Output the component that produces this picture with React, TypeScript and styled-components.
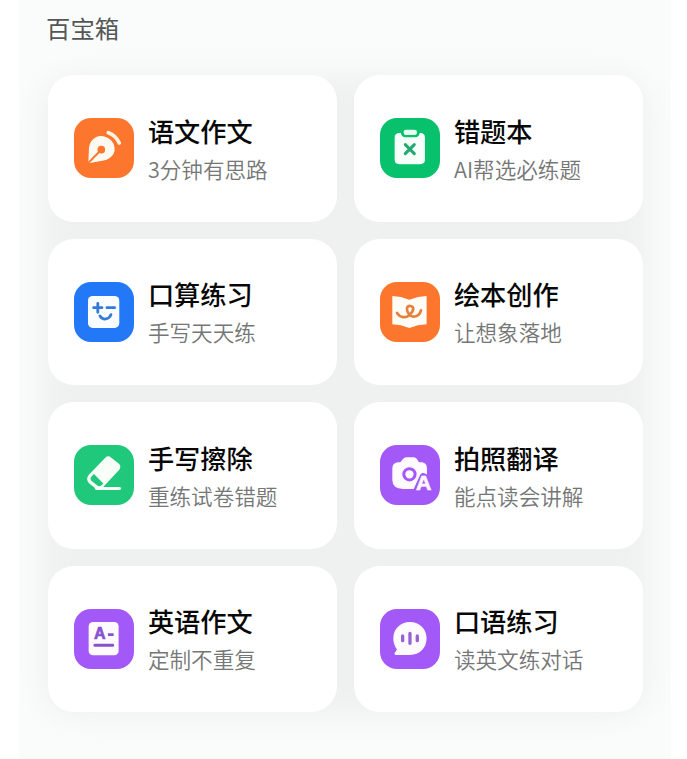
import React from 'react';
import styled, { createGlobalStyle } from 'styled-components';

const GlobalStyle = createGlobalStyle`
  * { box-sizing: border-box; }
  html, body { margin: 0; background: #fff; }
  body { font-family: "Noto Sans CJK SC", sans-serif; }
`;

const Page = styled.main`
  width: 687px;
  height: 759px;
  padding: 0 16px 0 19px;
  overflow: hidden;
  background: #fff;
`;

const Panel = styled.section`
  height: 100%;
  padding: 10px 27px 0 29px;
  overflow: hidden;
  background: #fafcfb;
`;

const Heading = styled.h1`
  margin: 0 0 29px -2px;
  height: 36px;
  font-size: 24.4px;
  line-height: 36px;
  font-weight: 400;
  color: #555756;
`;

const Grid = styled.div`
  position: relative;
  display: grid;
  grid-template-columns: 289px 289px;
  grid-auto-rows: 146.5px;
  gap: 17px;
  width: 595px;

  /* soft shade shared by all the cards */
  &::before {
    content: '';
    position: absolute;
    inset: 0 -6px -4px;
    border-radius: 36px;
    background: #eff0f0;
    filter: blur(12px);
  }
`;

const Card = styled.article`
  position: relative;
  display: flex;
  align-items: center;
  gap: 14px;
  padding: 0 0 0 26.3px;
  border-radius: 26px;
  background: #fff;
`;

const Tile = styled.svg`
  flex: none;
  width: 59.6px;
  height: 59.6px;
  border-radius: 17px;
  background: ${(p) => p.color};
`;

const Copy = styled.div`
  display: flex;
  flex-direction: column;
  padding-top: 3px;
  white-space: nowrap;
`;

const Title = styled.h2`
  margin: 0;
  font-size: 26.2px;
  line-height: 38px;
  font-weight: 500;
  color: #080808;
`;

const Subtitle = styled.p`
  margin: 0;
  font-size: 21.6px;
  line-height: 38px;
  font-weight: 350;
  color: #757776;
`;

const Letter = styled.text`
  font-family: "Liberation Sans", sans-serif;
  font-weight: 700;
`;

const ORANGE = '#fc762d';
const GREEN = '#08c16c';
const MINT = '#1fc87a';
const BLUE = '#2378f7';
const PURPLE = '#a259f8';

type Tool = {
  title: string;
  note: string;
  color: string;
  top: number;
  art: React.ReactNode;
};

const tools: Tool[] = [
  {
    title: '语文作文', note: '3分钟有思路', color: ORANGE, top: 32,
    art: (
      <>
        <path d="M74 168 L76 121 Q78 99 98 89 Q112 83 128 90 Q150 99 153 121 Q155 140 137 153 Q129 159 120 160 Z" fill="#fffaf1" />
        <path d="M72 169 L112 128" stroke={ORANGE} strokeWidth="6" />
        <circle cx="113" cy="127" r="11.5" fill={ORANGE} />
        <path d="M134 76 Q157 84 167 107" stroke="#fff1df" strokeWidth="11" strokeLinecap="round" fill="none" />
      </>
    ),
  },
  {
    title: '错题本', note: 'AI帮选必练题', color: GREEN, top: 32,
    art: (
      <>
        <path d="M90 77 H152 Q166 77 166 91 V157 Q166 171 152 171 H89 Q75 171 75 157 V91 Q75 77 90 77Z" fill="#f7fffb" />
        <rect x="94" y="60" width="56" height="30" rx="13" fill={GREEN} />
        <rect x="102" y="67" width="40" height="16" rx="7" fill="#e5fff3" />
        <path d="M107 112 L134 139 M134 112 L107 139" stroke="#20a970" strokeWidth="9" strokeLinecap="round" />
      </>
    ),
  },
  {
    title: '口算练习', note: '手写天天练', color: BLUE, top: 30,
    art: (
      <>
        <rect x="73" y="72" width="94" height="96" rx="14" fill="#fafdff" />
        <path d="M90 107 H115 M102.5 94 V121 M130 107 H153 M109 132 Q116 143 127 141 Q138 139 142 128" stroke="#347bd8" strokeWidth="8.5" strokeLinecap="round" fill="none" />
      </>
    ),
  },
  {
    title: '绘本创作', note: '让想象落地', color: ORANGE, top: 30,
    art: (
      <>
        <path d="M68 72 Q94 73 119 83 Q145 73 171 72 V157 Q145 158 119 168 Q94 158 68 157 Z" fill="#fffdf5" />
        <path d="M82 123 C90 137 108 140 120 129 C134 115 134 103 122 102 C109 101 109 116 119 128 C129 139 150 134 154 115" stroke="#e5803f" strokeWidth="8" strokeLinecap="round" fill="none" />
      </>
    ),
  },
  {
    title: '手写擦除', note: '重练试卷错题', color: MINT, top: 30,
    art: (
      <>
        <path d="M75 120 L125 68 Q134 60 143 68 L166 86 Q174 94 167 104 L118 157 Q107 167 95 160 L76 145 Q65 133 75 120Z" fill="#f8fff9" />
        <path d="M91 117 L119 146 Q111 157 101 152 L84 138 Q78 131 83 125Z" fill={MINT} />
        <path d="M98 161 H168" stroke="#f8fff9" strokeWidth="9" strokeLinecap="round" />
      </>
    ),
  },
  {
    title: '拍照翻译', note: '能点读会讲解', color: PURPLE, top: 30,
    art: (
      <>
        <path d="M84 82 H92 L100 72 Q104 67 110 67 H132 Q138 67 142 72 L148 82 H158 Q171 85 172 98 V162 H101 Q68 161 68 135 V100 Q69 84 84 82Z" fill="#fffaff" />
        <circle cx="119.5" cy="118" r="17" fill="none" stroke={PURPLE} strokeWidth="9" />
        <path d="M134 169 L153 127 Q158 113 169 122 L190 169Z" fill={PURPLE} stroke={PURPLE} strokeWidth="9" />
        <Letter x="139" y="166" fontSize="61" textLength="46" lengthAdjust="spacingAndGlyphs" fill="#fff7ff" stroke="#fff7ff" strokeWidth="2">A</Letter>
      </>
    ),
  },
  {
    title: '英语作文', note: '定制不重复', color: PURPLE, top: 33,
    art: (
      <>
        <rect x="75" y="72" width="90" height="100" rx="13" fill="#fefaff" />
        <Letter x="91" y="124" fontSize="48" fill="#8852cf" stroke="#8852cf" strokeWidth="2">A</Letter>
        <path d="M133 110 H150" stroke="#8852cf" strokeWidth="8" />
        <path d="M94 142 H147" stroke="#8852cf" strokeWidth="9" strokeLinecap="round" />
      </>
    ),
  },
  {
    title: '口语练习', note: '读英文练对话', color: PURPLE, top: 33,
    art: (
      <>
        <path d="M121 72 C150 72 171 93 171 121 C171 150 150 171 121 171 H78 Q72 170 76 164 L82 155 C75 145 71 134 71 121 C71 93 92 72 121 72Z" fill="#fffaff" />
        <path d="M99 114 V128 M121 106 V136 M143 114 V128" stroke="#9664d2" strokeWidth="10" strokeLinecap="round" />
      </>
    ),
  },
];

export default function App() {
  return (
    <Page>
      <GlobalStyle />
      <Panel>
        <Heading>百宝箱</Heading>
        <Grid>
          {tools.map((tool) => (
            <Card key={tool.title}>
              <Tile color={tool.color} viewBox={`31 ${tool.top} 179 179`} aria-hidden="true">
                {tool.art}
              </Tile>
              <Copy>
                <Title>{tool.title}</Title>
                <Subtitle>{tool.note}</Subtitle>
              </Copy>
            </Card>
          ))}
        </Grid>
      </Panel>
    </Page>
  );
}
